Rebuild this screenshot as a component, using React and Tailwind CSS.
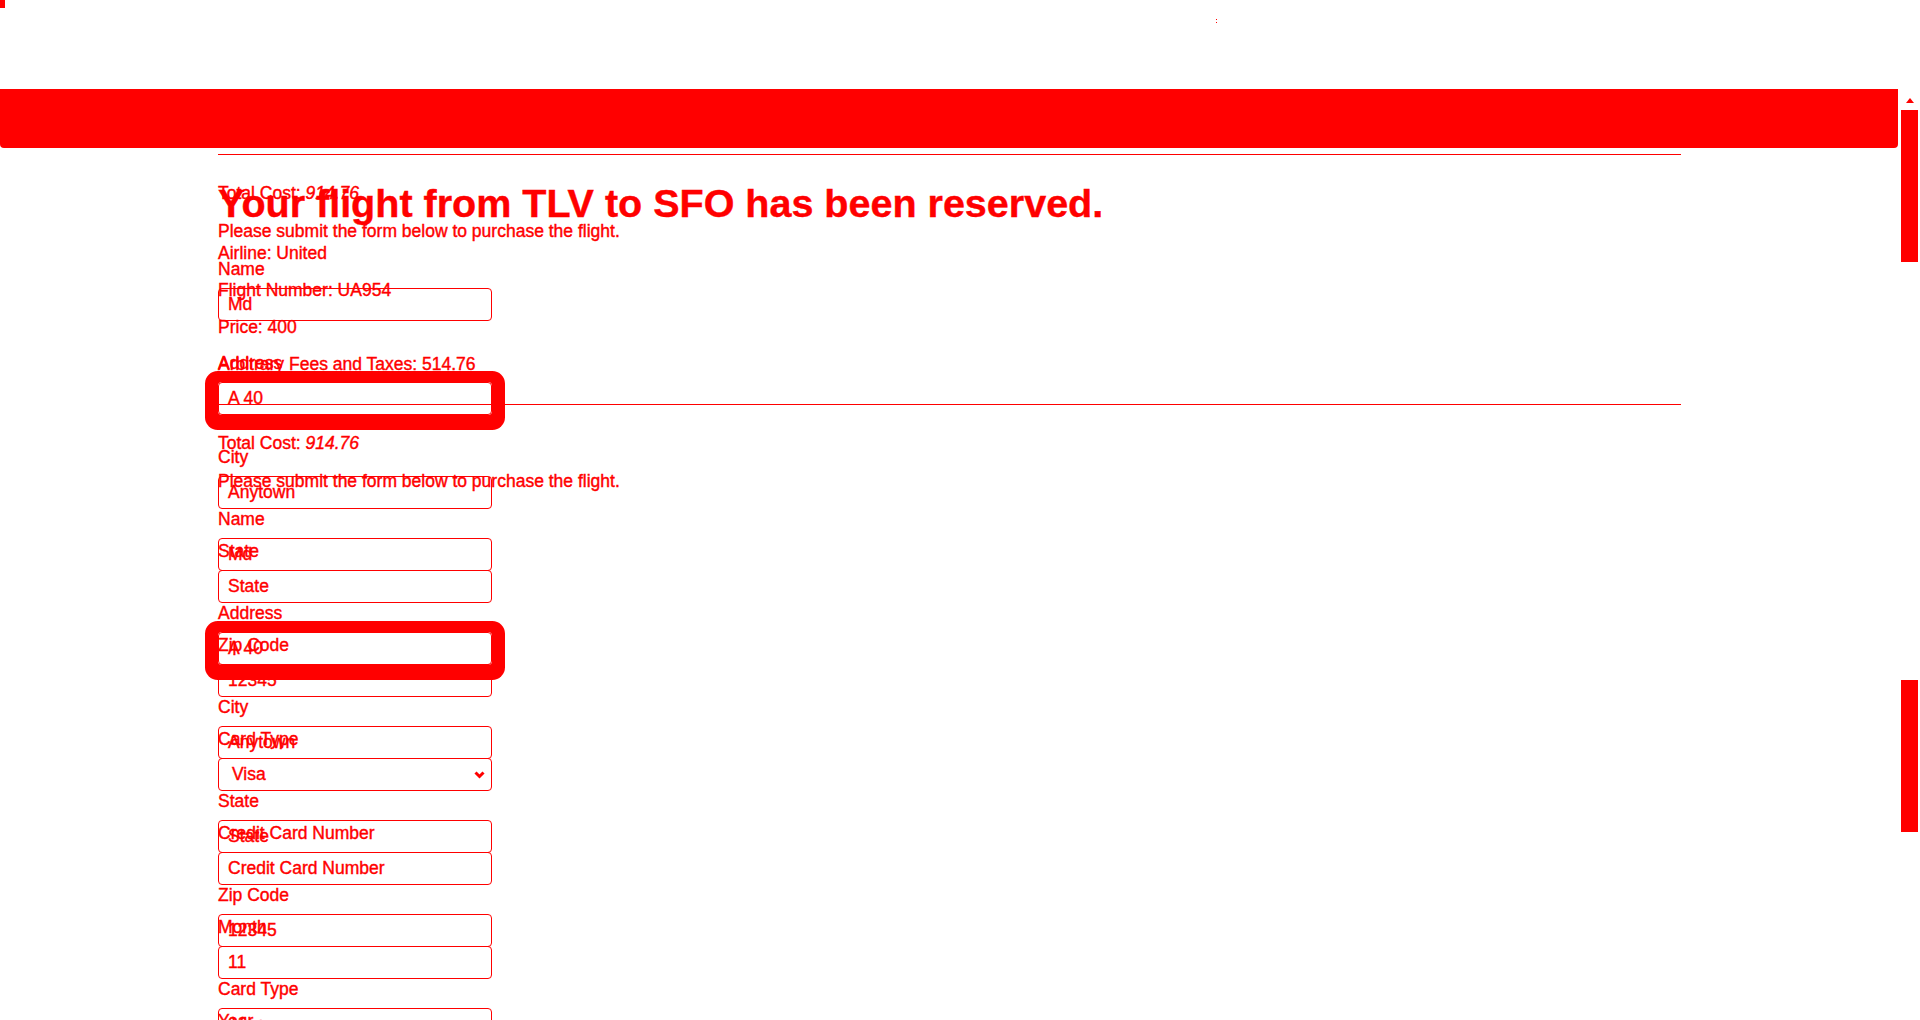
// App.jsx — reserved flight page, two overlaid states drawn in red
const fields = [
  { label: "Name", value: "Md" },
  { label: "Address", value: "A 40", focused: true },
  { label: "City", value: "Anytown" },
  { label: "State", value: "State" },
  { label: "Zip Code", value: "12345" },
  { label: "Card Type", value: "Visa", select: true },
  { label: "Credit Card Number", value: "Credit Card Number" },
  { label: "Month", value: "11" },
  { label: "Year", value: "2017" },
  { label: "Name on Card", value: "John Smith" },
];

const Field = ({ label, value, focused, select }) => {
  return (
    <div className="flex flex-col">
      <label className="block leading-[24px] mb-[7px]">{label}</label>
      {select ? (
        <div className="flex items-center justify-between w-[274px] h-[33px] border border-[#ff0000] rounded-[4px] pl-[13px] pr-[6px]">
          <span>{value}</span>
          <svg width="11" height="8" viewBox="0 0 11 8" fill="none">
            <polyline
              points="1.5,1.5 5.5,5.5 9.5,1.5"
              stroke="#ff0000"
              strokeWidth="3"
            />
          </svg>
        </div>
      ) : (
        <div
          className={
            focused
              ? "flex items-center w-[274px] h-[33px] border border-[#ff0000] rounded-[4px] pl-[9px] shadow-[0_2px_0_13px_#ff0000]"
              : "flex items-center w-[274px] h-[33px] border border-[#ff0000] rounded-[4px] pl-[9px]"
          }
        >
          {value}
        </div>
      )}
      <div className="h-[30px]" />
    </div>
  );
};

const Page = () => {
  return (
    <div className="ml-[218px] w-[1463px] text-[17.5px]">
      {/* Heading */}
      <h2 className="text-[39.5px] font-bold leading-[43px]">
        Your flight from TLV to SFO has been reserved.
      </h2>

      <div className="mt-[16px] flex flex-col gap-[13px] leading-[24px]">
        <p>Airline: United</p>
        <p>Flight Number: UA954</p>
        <p>Price: 400</p>
        <p>Arbitrary Fees and Taxes: 514.76</p>
      </div>

      <hr className="mt-[28px] border-0 border-t border-[#ff0000]" />

      <p className="mt-[26px] leading-[24px]">
        Total Cost: <em>914.76</em>
      </p>
      <p className="mt-[14px] leading-[24px]">
        Please submit the form below to purchase the flight.
      </p>

      {/* Form */}
      <div className="mt-[14px] flex flex-col">
        {fields.map((f) => (
          <Field key={f.label} {...f} />
        ))}
      </div>
    </div>
  );
};

export default function App() {
  return (
    <div className="relative w-full h-[1020px] overflow-hidden bg-white text-[#ff0000] font-['Liberation_Sans',Arial,sans-serif] [-webkit-text-stroke:0.4px_#ff0000]">
      {/* top strip */}
      <div className="flex h-[89px]">
        <div className="w-[5px] h-[8px] bg-[#ff0000]" />
        <div className="ml-[1211px] mt-[19px] flex flex-col gap-[2px]">
          <div className="w-[1px] h-[1px] bg-[#ff0000]" />
          <div className="w-[1px] h-[1px] bg-[#ff0000]" />
        </div>
      </div>

      {/* bar */}
      <div className="w-[1898px] h-[59px] bg-[#ff0000] rounded-b-[4px]" />

      {/* unscrolled state */}
      <div className="mt-[34px]">
        <Page />
      </div>

      {/* scrolled state, lying over the first */}
      <div className="absolute left-0 right-0 top-[150px] bottom-0 overflow-hidden">
        <div className="mt-[-218px]">
          <Page />
        </div>
      </div>

      {/* scrollbar */}
      <div className="absolute top-0 right-[2px] w-[17px] h-full flex flex-col items-center">
        <div className="mt-[98px] w-0 h-0 border-l-[4px] border-r-[4px] border-b-[5px] border-l-transparent border-r-transparent border-b-[#ff0000]" />
        <div className="mt-[7px] w-[17px] h-[152px] bg-[#ff0000]" />
        <div className="mt-[418px] w-[17px] h-[152px] bg-[#ff0000]" />
      </div>
    </div>
  );
}
